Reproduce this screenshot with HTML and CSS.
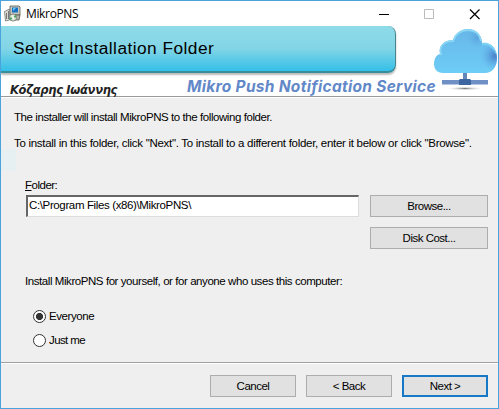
FILE: index.html
```html
<!DOCTYPE html>
<html lang="en">
<head>
<meta charset="utf-8">
<title>MikroPNS</title>
<link rel="stylesheet" href="styles.css">
</head>
<body>
<div class="window">
  <header class="titlebar">
    <svg class="app-icon" width="17" height="17" viewBox="0 0 17 17">
      <path d="M6 1h9l1 1v8h-9l-1-1z" fill="#c9c9c0" stroke="#55584f" stroke-width=".8"/>
      <path d="M8 2.500h6v5H8z" fill="#1670c4"/>
      <path d="M9 3h3L9 6z" fill="#67c3ef"/>
      <path d="M9 10h7l-1 5h-5z" fill="#b5b5aa" stroke="#444" stroke-width=".7"/>
      <path d="M0.500 6.500l5-2.500v11l-4 1z" fill="#d9d9cf" stroke="#777" stroke-width=".8"/>
      <path d="M2.500 8v6M4.500 6v8" stroke="#777"/>
      <circle cx="9" cy="12.500" r="3.600" fill="#e4e8dc" stroke="#68716a" stroke-width=".8"/>
      <path d="M9 12.500l2.500-3 1 3zM9 12.500l-2.500 3-1-3z" fill="#46a765"/>
      <circle cx="9" cy="12.500" r="1" fill="#fff"/>
    </svg>
    <span class="caption">MikroPNS</span>
    <svg class="controls" width="104" height="12" viewBox="0 0 104 12" fill="none">
      <path d="M1 6.500h10" stroke="#000"/>
      <path d="M46.500 1.500h9v9h-9z" stroke="#bbb"/>
      <path d="M92 1.500l9.500 9.500M101.500 1.500l-9.500 9.500" stroke="#000" stroke-width="1.200"/>
    </svg>
  </header>
  <section class="banner">
    <div class="banner-left">
      <h1 class="heading">Select Installation Folder</h1>
      <div class="credits">
        <span class="author">Κόζαρης Ιωάννης</span>
        <span class="product">Mikro Push Notification Service</span>
      </div>
    </div>
    <svg class="cloud" width="65" height="64" viewBox="433 27 65 64">
      <defs>
        <linearGradient id="sky" x1="0" y1="0" x2="0" y2="1"><stop offset="0" stop-color="#67b6e8"/><stop offset="1" stop-color="#6ecdf6"/></linearGradient>
        <radialGradient id="deep"><stop offset="0" stop-color="#4b7fc9"/><stop offset="1" stop-color="#5eb0ea" stop-opacity="0"/></radialGradient>
        <radialGradient id="shade"><stop offset="0" stop-color="#777"/><stop offset="1" stop-color="#fff" stop-opacity="0"/></radialGradient>
        <clipPath id="outline"><path d="M443 73C437 73 434 69 434 64C434 59 436 55 440 54C438 46 444 40 453 40C455 33 461 29 468 29C476 29 482 35 482 43C490 41 497 48 497 58C497 67 492 73 485 73Z"/></clipPath>
      </defs>
      <g clip-path="url(#outline)">
        <path d="M433 27h65v47h-65z" fill="url(#sky)"/>
        <circle cx="495" cy="56" r="15" fill="url(#deep)"/>
        <circle cx="477" cy="38" r="11" fill="url(#deep)" opacity=".4"/>
        <path d="M441 55C438 46 444 41 453 41C455 34 461 30 468 30C475 30 480 34 481 41" fill="none" stroke="#8bd8f5" stroke-width="2"/>
        <path d="M482 44C487 43 494 46 497 54" fill="none" stroke="#7bd4f5" stroke-width="2"/>
      </g>
      <ellipse cx="465" cy="88.500" rx="19" ry="2" fill="url(#shade)"/>
      <path d="M463 73h4v7h-4z" fill="#6487ba"/>
      <path d="M442 80h46v4.500h-46z" fill="#708fc5"/>
      <path d="M460 79h10l1 1v5h-12v-5z" fill="#3d659f"/>
    </svg>
  </section>
  <main class="body">
    <div class="patch"></div>
    <p class="line intro">The installer will install MikroPNS to the following folder.</p>
    <p class="line hint">To install in this folder, click "Next". To install to a different folder, enter it below or click "Browse".</p>
    <div class="folder-row">
      <div class="folder-field">
        <div class="line folder-label"><u>F</u>older:</div>
        <div class="folder-input"><span class="path">C:\Program Files (x86)\MikroPNS\</span></div>
      </div>
      <div class="side-buttons">
        <div class="button">Browse...</div>
        <div class="button">Disk Cost...</div>
      </div>
    </div>
    <p class="line who">Install MikroPNS for yourself, or for anyone who uses this computer:</p>
    <div class="radio"><span class="ring checked"></span><span>Everyone</span></div>
    <div class="radio"><span class="ring"></span><span class="just">Just me</span></div>
  </main>
  <footer class="footer">
    <div class="button">Cancel</div>
    <div class="button">&lt; Back</div>
    <div class="button primary">Next &gt;</div>
  </footer>
</div>
</body>
</html>
```
FILE: styles.css
```css
* { box-sizing: border-box; }
body { margin: 0; background: #fff; font: 11.500px/14px "Liberation Sans", Arial, sans-serif; color: #000; }
p, h1 { margin: 0; font-weight: normal; }
.window { width: 499px; height: 409px; border: 1px solid #4ba3dc; background: #efefef; display: flex; flex-direction: column; overflow: hidden; }
.titlebar { height: 25px; flex: none; background: #fff; display: flex; align-items: center; padding-left: 3px; }
.app-icon { flex: none; }
.caption { margin-left: 5px; font: 12px/16px "Open Sans", sans-serif; letter-spacing: -.35px; white-space: nowrap; }
.controls { margin-left: auto; margin-right: 16px; }
.banner { height: 71px; flex: none; background: #fff; border-bottom: 1px solid #9a9a9a; display: flex; box-shadow: 0 1px 0 #fff; }
.banner-left { width: 432px; flex: none; }
.heading { width: 395px; height: 47px; padding-left: 12px; font-size: 17.300px; line-height: 45px; letter-spacing: .46px; background: linear-gradient(#8edbe9, #82d5e6 50%, #35bfe8); border-radius: 0 8px 8px 0; border-right: 1px solid #47848e; border-bottom: 2px solid #378e9b; box-shadow: 0 2px 2px #bbb; white-space: nowrap; }
.credits { display: flex; height: 23px; white-space: nowrap; }
.author { width: 186px; flex: none; padding: 10px 0 0 9px; font: italic bold 11.500px/14px "DejaVu Sans", sans-serif; letter-spacing: -.3px; color: #222; }
.product { padding-top: 6px; font: italic bold 15.500px/16px Inter, sans-serif; color: #6288c8; letter-spacing: .3px; }
.cloud { flex: none; margin-top: 1px; }
.body { height: 265px; flex: none; position: relative; padding: 13px 10px 0 13px; }
.patch { position: absolute; left: 0; top: 52px; width: 15px; height: 22px; background: #e6eff1; }
.line { white-space: nowrap; height: 14px; }
.intro { letter-spacing: -.43px; }
.hint { margin-top: 12px; letter-spacing: -.29px; }
.folder-row { display: flex; justify-content: space-between; margin: 28px 0 0 11px; }
.folder-field { width: 334px; }
.folder-label { letter-spacing: -.5px; }
.folder-input { height: 22px; margin: 3px 0 0 1px; background: #fff; border: 2px solid #666; border-right: 1px solid #ddd; border-bottom: 1px solid #ddd; padding: 1px; white-space: nowrap; }
.path { letter-spacing: -.37px; }
.side-buttons { display: grid; gap: 10px; padding-top: 17px; width: 118px; }
.button { height: 22px; background: #e1e1e1; border: 1px solid #adadad; display: flex; align-items: center; justify-content: center; white-space: nowrap; letter-spacing: -.5px; }
.who { margin: 25px 0 21px 11px; letter-spacing: -.43px; }
.radio { display: flex; align-items: center; height: 14px; margin: 0 0 10px 19px; gap: 3px; letter-spacing: -.43px; }
.just { letter-spacing: -.6px; }
.ring { width: 13px; height: 13px; border: 1px solid #333; border-radius: 50%; background: #fff; }
.checked { background: radial-gradient(circle, #333 3.200px, #fff 3.900px); }
.footer { flex: 1; border-top: 1px solid #a0a0a0; box-shadow: inset 0 1px 0 #fff; display: flex; justify-content: flex-end; gap: 10px; padding: 12px 10px 0; }
.footer .button { width: 86px; }
.footer .primary { border: 2px solid #1878c8; }
```
